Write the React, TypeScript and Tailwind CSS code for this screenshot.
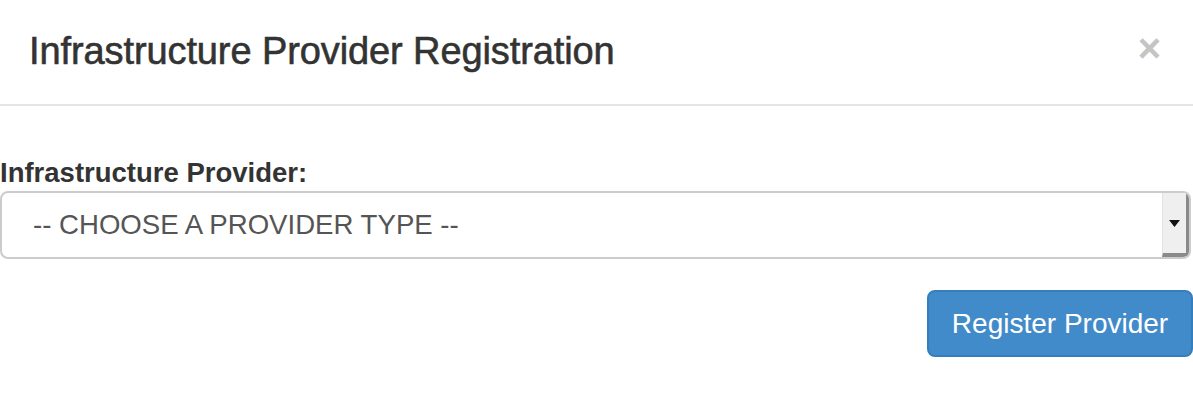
import React from "react";

const App: React.FC = () => {
  return (
    <div className="w-[1193px] h-[404px] bg-white text-[#333] font-['Liberation_Sans',Arial,sans-serif] overflow-hidden">
      <div className="flex items-center justify-between h-[106px] border-b-2 border-[#e5e5e5] pl-[29px] pr-[32px]">
        <h4 className="text-[38px] leading-none font-normal tracking-[-0.1px] pb-[2px] [-webkit-text-stroke:0.6px_#333]">
          Infrastructure Provider Registration
        </h4>
        <button className="text-[#c4c4c4] text-[40px] font-bold leading-none pb-[8px]">
          ×
        </button>
      </div>
      <div className="flex flex-col pt-[51px]">
        <label
          htmlFor="provider"
          className="block text-[27.5px] leading-[32px] font-bold mb-[2px]"
        >
          Infrastructure Provider:
        </label>
        <div
          id="provider"
          className="flex items-stretch w-[1191px] h-[68px] border-2 border-[#cccccc] rounded-[8px] bg-white overflow-hidden"
        >
          <div className="flex-1 flex items-center pl-[31px] text-[27.6px] text-[#555]">
            -- CHOOSE A PROVIDER TYPE --
          </div>
          <div className="w-[27px] flex items-center justify-center bg-[#efefef] border-l border-[#e2e2e2] border-b-[4px] border-b-[#8a8a8a] border-r-[3px] border-r-[#8a8a8a]">
            <svg width="11" height="7" viewBox="0 0 11 7">
              <path d="M0 0 H11 L5.5 7 Z" fill="#111" />
            </svg>
          </div>
        </div>
        <div className="flex justify-end mt-[31px]">
          <button className="w-[266px] h-[67px] rounded-[8px] bg-[#428bca] border-2 border-[#357ebd] text-white text-[28px] leading-none">
            Register Provider
          </button>
        </div>
      </div>
    </div>
  );
};

export default App;
